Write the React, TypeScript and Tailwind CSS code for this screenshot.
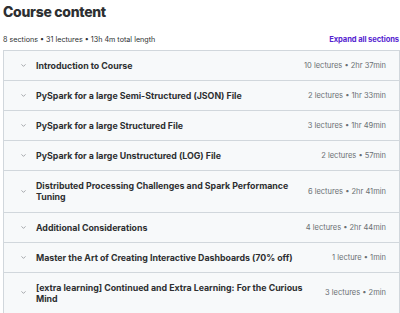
import React from 'react';
import { ChevronDown } from 'lucide-react';

const sections = [
  { title: 'Introduction to Course', meta: '10 lectures • 2hr 37min' },
  { title: 'PySpark for a large Semi-Structured (JSON) File', meta: '2 lectures • 1hr 33min' },
  { title: 'PySpark for a large Structured File', meta: '3 lectures • 1hr 49min' },
  { title: 'PySpark for a large Unstructured (LOG) File', meta: '2 lectures • 57min' },
  { title: 'Distributed Processing Challenges and Spark Performance Tuning', meta: '6 lectures • 2hr 41min' },
  { title: 'Additional Considerations', meta: '4 lectures • 2hr 44min' },
  { title: 'Master the Art of Creating Interactive Dashboards (70% off)', meta: '1 lecture • 1min' },
  { title: '[extra learning] Continued and Extra Learning: For the Curious Mind', meta: '3 lectures • 2min' },
];

const App = () => {
  return (
    <div className="w-[400px] h-[313px] overflow-hidden bg-white font-['Inter',sans-serif] text-[#2d2f31]">
      <h2 className="pl-[3px] pt-[2px] text-[14px] leading-[20px] font-extrabold tracking-[-0.3px]">Course content</h2>
      <div className="flex items-end justify-between pl-[3px] mt-[11px] h-[12px]">
        <span className="text-[7.2px] leading-[10px] text-[#2d2f31]">8 sections • 31 lectures • 13h 4m total length</span>
        <button className="text-[7.6px] leading-[10px] font-bold text-[#5624d0] pr-[1px] tracking-[-0.1px]">Expand all sections</button>
      </div>
      <div className="ml-[3px] mt-[5px] border border-[#d1d7dc]">
        {sections.map((s, i) => (
          <div
            key={i}
            className={`flex items-center bg-[#f7f9fa] pl-[16px] pr-[13px] py-[9px] ${i > 0 ? 'border-t border-[#d1d7dc]' : ''}`}
          >
            <ChevronDown className="w-[7px] h-[7px] text-[#6a6f73] shrink-0" strokeWidth={2} />
            <span className="ml-[9px] flex-1 text-[8.8px] leading-[11.1px] font-bold pr-[12px]">{s.title}</span>
            <span className="text-[7.5px] leading-[11.1px] text-[#6a6f73] whitespace-nowrap">{s.meta}</span>
          </div>
        ))}
      </div>
    </div>
  );
};

export default App;
